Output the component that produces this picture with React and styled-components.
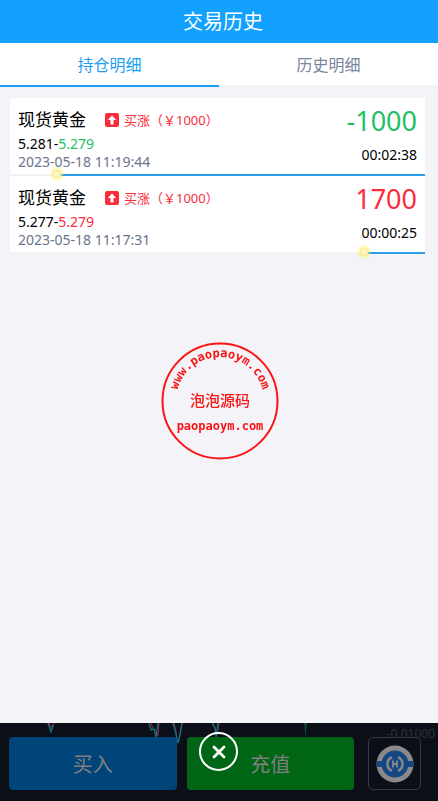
import React from "react";
import styled, { createGlobalStyle } from "styled-components";

const orders = [
  {
    id: 1,
    name: "现货黄金",
    type: "买涨（￥1000）",
    open: "5.281",
    close: "5.279",
    date: "2023-05-18 11:19:44",
    profit: "-1000",
    left: "00:02:38",
    color: "#22c063",
    passed: 11,
  },
  {
    id: 2,
    name: "现货黄金",
    type: "买涨（￥1000）",
    open: "5.277",
    close: "5.279",
    date: "2023-05-18 11:17:31",
    profit: "1700",
    left: "00:00:25",
    color: "#fb2c3c",
    passed: 85,
  },
];

export default function App() {
  return (
    <Page>
      <GlobalStyle />
      <Header>
        <Title>交易历史</Title>
      </Header>
      <Tabs>
        <Tab type="button" $active>
          持仓明细
        </Tab>
        <Tab type="button">历史明细</Tab>
      </Tabs>
      <OrderList>
        {orders.map((order) => (
          <OrderItem key={order.id} order={order} />
        ))}
      </OrderList>
      <Seal />
      <Footer>
        <ChartTail />
        <AxisLabel>-0.01000</AxisLabel>
        <FooterButton type="button" $bg="#00457a">
          买入
        </FooterButton>
        <FooterButton type="button" $bg="#006616">
          充值
        </FooterButton>
        <ServiceButton type="button" aria-label="客服">
          <ServiceLogo />
        </ServiceButton>
        <CloseButton type="button" aria-label="关闭">
          <svg width="14" height="14" viewBox="0 0 14 14">
            <path
              d="M2 2L12 12M12 2L2 12"
              stroke="#fff"
              strokeWidth="2.8"
              strokeLinecap="round"
            />
          </svg>
        </CloseButton>
      </Footer>
    </Page>
  );
}

function OrderItem({ order }) {
  return (
    <Order>
      <OrderBody>
        <OrderInfo>
          <OrderTop>
            <OrderName>{order.name}</OrderName>
            <OrderType>
              <UpIcon />
              {order.type}
            </OrderType>
          </OrderTop>
          <OrderPrice>
            {order.open}-<Colored $color={order.color}>{order.close}</Colored>
          </OrderPrice>
          <OrderDate>{order.date}</OrderDate>
        </OrderInfo>
        <OrderResult>
          <Profit $color={order.color}>{order.profit}</Profit>
          <TimeLeft>{order.left}</TimeLeft>
        </OrderResult>
      </OrderBody>
      <Track>
        <TrackRest style={{ width: `${100 - order.passed}%` }}>
          <TrackDot />
        </TrackRest>
      </Track>
    </Order>
  );
}

function UpIcon() {
  return (
    <svg width="14" height="14" viewBox="0 0 14 14">
      <rect width="14" height="14" rx="2" fill="#fb2c3c" />
      <path d="M7 2.5L11.2 7H8.5V11.5H5.5V7H2.8Z" fill="#fff" />
    </svg>
  );
}

function Seal() {
  return (
    <SealBox>
      <svg width="118" height="118" viewBox="0 0 118 118" fill="#fa1414">
        <circle cx="59" cy="59" r="57.5" fill="none" stroke="#fa1414" strokeWidth="2" />
        <path id="sealArc" d="M15 59A44 44 0 0 1 103 59" fill="none" />
        <SealText>
          <textPath href="#sealArc" startOffset="50%" textAnchor="middle">
            www.paopaoym.com
          </textPath>
        </SealText>
        <SealName x="59" y="64" textAnchor="middle">
          泡泡源码
        </SealName>
        <SealText x="59" y="88" textAnchor="middle">
          paopaoym.com
        </SealText>
      </svg>
    </SealBox>
  );
}

function ChartTail() {
  return (
    <ChartSvg width="330" height="22" viewBox="0 0 330 22" fill="none">
      <g stroke="#8a1f4c" strokeWidth="1.2">
        <path d="M49 0L52 6L54 0" />
        <path d="M151 0L153 6L156 7L158 13L159 0" />
        <path d="M174 0L176 8L177 18L179 17L182 0" />
        <path d="M213 0L215 6L217 12L219 0" />
      </g>
      <g stroke="#087c80" strokeWidth="1.2">
        <path d="M48 0L51 9L53 2" />
        <path d="M149 0L151 7L154 6L156 14L158 0" />
        <path d="M173 0L175 7L178 20L180 12L182 0" />
        <path d="M212 0L215 5L216 14L218 0" />
      </g>
      <path d="M304 0L305.500 14L307 0" fill="#0a4a2c" />
    </ChartSvg>
  );
}

function ServiceLogo() {
  return (
    <svg width="38" height="38" viewBox="0 0 38 38" fill="none">
      <circle cx="19" cy="19" r="18.500" fill="#8a8a8a" />
      <circle cx="19" cy="19" r="13.500" fill="#154783" />
      <path d="M0.500 16H37.500V22H0.500Z" fill="#154783" />
      <path d="M16 12.100A7.500 7.500 0 0 0 16 25.900M22 12.100A7.500 7.500 0 0 1 22 25.900" stroke="#8a8a8a" strokeWidth="2.4" />
      <path d="M17 15.500V22.500M21 15.500V22.500M17 19H21" stroke="#8a8a8a" strokeWidth="1.8" />
    </svg>
  );
}

const GlobalStyle = createGlobalStyle`
  * {
    box-sizing: border-box;
  }

  body {
    margin: 0;
    background: #f3f3f8;
    font-family: "Noto Sans", "Noto Sans CJK SC", sans-serif;
    font-size: 14px;
  }

  button {
    margin: 0;
    padding: 0;
    border: 0;
    font-family: inherit;
    cursor: pointer;
  }
`;

const Page = styled.div`
  display: flex;
  flex-direction: column;
  min-height: 100vh;
`;

const Header = styled.header`
  display: flex;
  justify-content: center;
  align-items: center;
  height: 43px;
  padding-left: 8px;
  background: #12a1ff;
`;

const Title = styled.h1`
  margin: 0;
  color: white;
  font-size: 20px;
  line-height: 28px;
  font-weight: 400;
`;

const Tabs = styled.nav`
  display: flex;
  height: 44px;
`;

const Tab = styled.button`
  flex: 1;
  background: white;
  border-bottom: 2px solid ${({ $active }) => ($active ? "#1a9ff5" : "#f3f3f8")};
  color: ${({ $active }) => ($active ? "#1a9ff5" : "#77849b")};
  font-size: 16px;
  font-weight: 400;
`;

const OrderList = styled.main`
  flex: 1;
  padding: 11px 13px 0 10px;
`;

const Order = styled.section`
  background: white;
`;

const OrderBody = styled.div`
  display: flex;
  justify-content: space-between;
  height: 76px;
  padding: 7px 8px 0;
`;

const OrderInfo = styled.div`
  display: flex;
  flex-direction: column;
`;

const OrderTop = styled.div`
  display: flex;
  align-items: center;
  gap: 19px;
  height: 30px;
`;

const OrderName = styled.h2`
  margin: 0;
  color: black;
  font-size: 17px;
  line-height: 28px;
  font-weight: 400;
`;

const OrderType = styled.span`
  display: flex;
  align-items: center;
  gap: 5px;
  color: #fb2c3c;
  font-size: 13px;
  line-height: 18px;
`;

const OrderPrice = styled.div`
  color: black;
  line-height: 18px;
`;

const Colored = styled.span`
  color: ${({ $color }) => $color};
`;

const OrderDate = styled.time`
  color: #68748a;
  line-height: 18px;
`;

const OrderResult = styled.div`
  display: flex;
  flex-direction: column;
  align-items: flex-end;
`;

const Profit = styled.strong`
  color: ${({ $color }) => $color};
  font-size: 27px;
  line-height: 32px;
  font-weight: 400;
`;

const TimeLeft = styled.span`
  margin-top: 9px;
  color: black;
  line-height: 18px;
`;

const Track = styled.div`
  display: flex;
  justify-content: flex-end;
  height: 2px;
  background: #f2f2f5;
`;

const TrackRest = styled.div`
  position: relative;
  height: 2px;
  background: #2b9ce8;
`;

const TrackDot = styled.span`
  position: absolute;
  top: -4px;
  left: -3px;
  width: 8px;
  height: 8px;
  border: 1px solid #fbe896;
  border-radius: 50%;
  background: #fdf7c8;
  box-shadow: 0 0 4px 1px #fbf04c;
`;

const SealBox = styled.div`
  position: fixed;
  top: 50%;
  left: 50%;
  width: 118px;
  height: 118px;
  margin: -59px 0 0 -58px;
  pointer-events: none;
`;

const SealText = styled.text`
  font-family: "DejaVu Sans Mono", monospace;
  font-size: 12px;
  font-weight: 700;
`;

const SealName = styled.text`
  font-family: "Noto Sans CJK SC", sans-serif;
  font-size: 15px;
  font-weight: 500;
`;

const Footer = styled.footer`
  position: relative;
  display: flex;
  gap: 10px;
  height: 78px;
  padding: 14px 17px 11px 9px;
  background: #0c0f18;
`;

const ChartSvg = styled.svg`
  position: absolute;
  top: 0;
  left: 0;
`;

const AxisLabel = styled.span`
  position: absolute;
  top: 2px;
  right: 3px;
  color: #303237;
  font-size: 12px;
  line-height: 18px;
`;

const FooterButton = styled.button`
  position: relative;
  flex: 1;
  border-radius: 4px;
  background: ${({ $bg }) => $bg};
  color: #808080;
  font-size: 20px;
  font-weight: 400;
`;

const ServiceButton = styled.button`
  display: flex;
  justify-content: center;
  align-items: center;
  width: 53px;
  margin-left: 4px;
  border: 1px solid #38393e;
  border-radius: 5px;
  background: transparent;
`;

//닫기 버튼은 하단 버튼 위에 겹쳐서 표시
const CloseButton = styled.button`
  position: absolute;
  top: 9px;
  left: 50%;
  display: flex;
  justify-content: center;
  align-items: center;
  width: 39px;
  height: 39px;
  margin-left: -20px;
  border: 2px solid white;
  border-radius: 50%;
  background: transparent;
`;
